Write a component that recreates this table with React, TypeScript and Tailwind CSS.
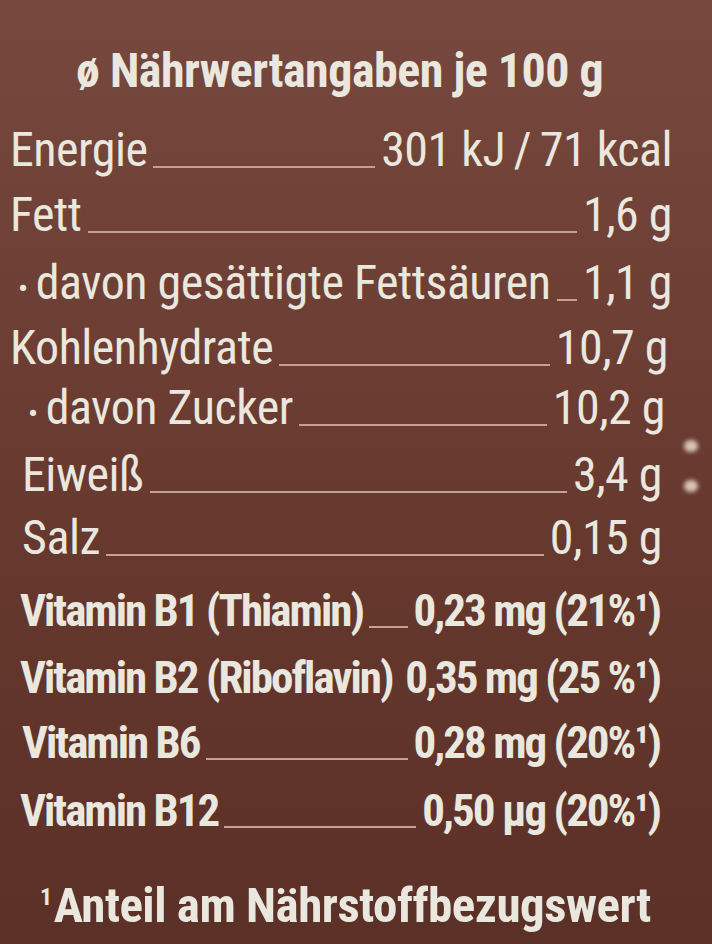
type Row = {
  label: string;
  value: string;
  bullet?: boolean;
  bold?: boolean;
  noLeader?: boolean;
  row: string;
};

const rows: Row[] = [
  { label: "Energie", value: "301 kJ\u2009/\u200971 kcal", row: "h-[65px] pl-[10px] pr-[40px]" },
  { label: "Fett", value: "1,6 g", row: "h-[68px] pl-[10px] pr-[40px]" },
  { label: "davon gesättigte Fettsäuren", value: "1,1 g", bullet: true, row: "h-[65px] pl-[18px] pr-[40px]" },
  { label: "Kohlenhydrate", value: "10,7 g", row: "h-[60px] pl-[10px] pr-[44px]" },
  { label: "davon Zucker", value: "10,2 g", bullet: true, row: "h-[67px] pl-[28px] pr-[47px]" },
  { label: "Eiweiß", value: "3,4 g", row: "h-[63px] pl-[22px] pr-[50px]" },
  { label: "Salz", value: "0,15 g", row: "h-[73px] pl-[22px] pr-[50px]" },
  { label: "Vitamin B1 (Thiamin)", value: "0,23 mg (21%¹)", bold: true, row: "h-[67px] pl-[20px] pr-[52px]" },
  { label: "Vitamin B2 (Riboflavin)", value: "0,35 mg (25 %¹)", bold: true, noLeader: true, row: "h-[65px] pl-[20px] pr-[52px]" },
  { label: "Vitamin B6", value: "0,28 mg (20%¹)", bold: true, row: "h-[68px] pl-[22px] pr-[52px]" },
  { label: "Vitamin B12", value: "0,50 µg (20%¹)", bold: true, row: "h-[66px] pl-[20px] pr-[52px]" },
];

function NutrientRow({ r }: { r: Row }) {
  const weight = r.bold
    ? "font-bold text-[45px] tracking-[-2px]"
    : "font-normal text-[48px] tracking-[-0.5px]";
  return (
    <div className={`flex items-baseline leading-[66px] ${r.row} ${weight}`}>
      {r.bullet && <span className="mr-[8px] text-[30px]">•</span>}
      <span className="whitespace-nowrap">{r.label}</span>
      {r.noLeader ? (
        <div className="flex-1" />
      ) : (
        <div className="mx-[6px] h-[2px] flex-1 translate-y-[2px] bg-[#c7a092]" />
      )}
      <span className="whitespace-nowrap">{r.value}</span>
    </div>
  );
}

export default function App() {
  return (
    <div className="relative h-[944px] w-[712px] overflow-hidden bg-linear-to-b from-[#77483e] via-[#683a30] to-[#5b3026] pt-[38px] font-['Roboto',sans-serif] font-stretch-[75%] text-[#e9e7de]">
      <h1 className="h-[79px] pl-[76px] text-[48px] font-bold leading-[66px] tracking-[-0.5px]">
        ø Nährwertangaben je 100 g
      </h1>

      {rows.map((r) => (
        <NutrientRow key={r.label} r={r} />
      ))}

      <p className="mt-[20px] pl-[40px] text-[49px] font-bold leading-[66px] tracking-[-0.5px]">
        <span className="mr-[2px] align-super text-[24px]">1</span>Anteil am Nährstoffbezugswert
      </p>

      {/* light specks on the right edge of the photo */}
      <div className="absolute left-[684px] top-[440px] h-[12px] w-[14px] rounded-full bg-[#d9c4b8] blur-[2px]" />
      <div className="absolute left-[684px] top-[480px] h-[12px] w-[14px] rounded-full bg-[#d9c4b8] blur-[2px]" />
    </div>
  );
}
